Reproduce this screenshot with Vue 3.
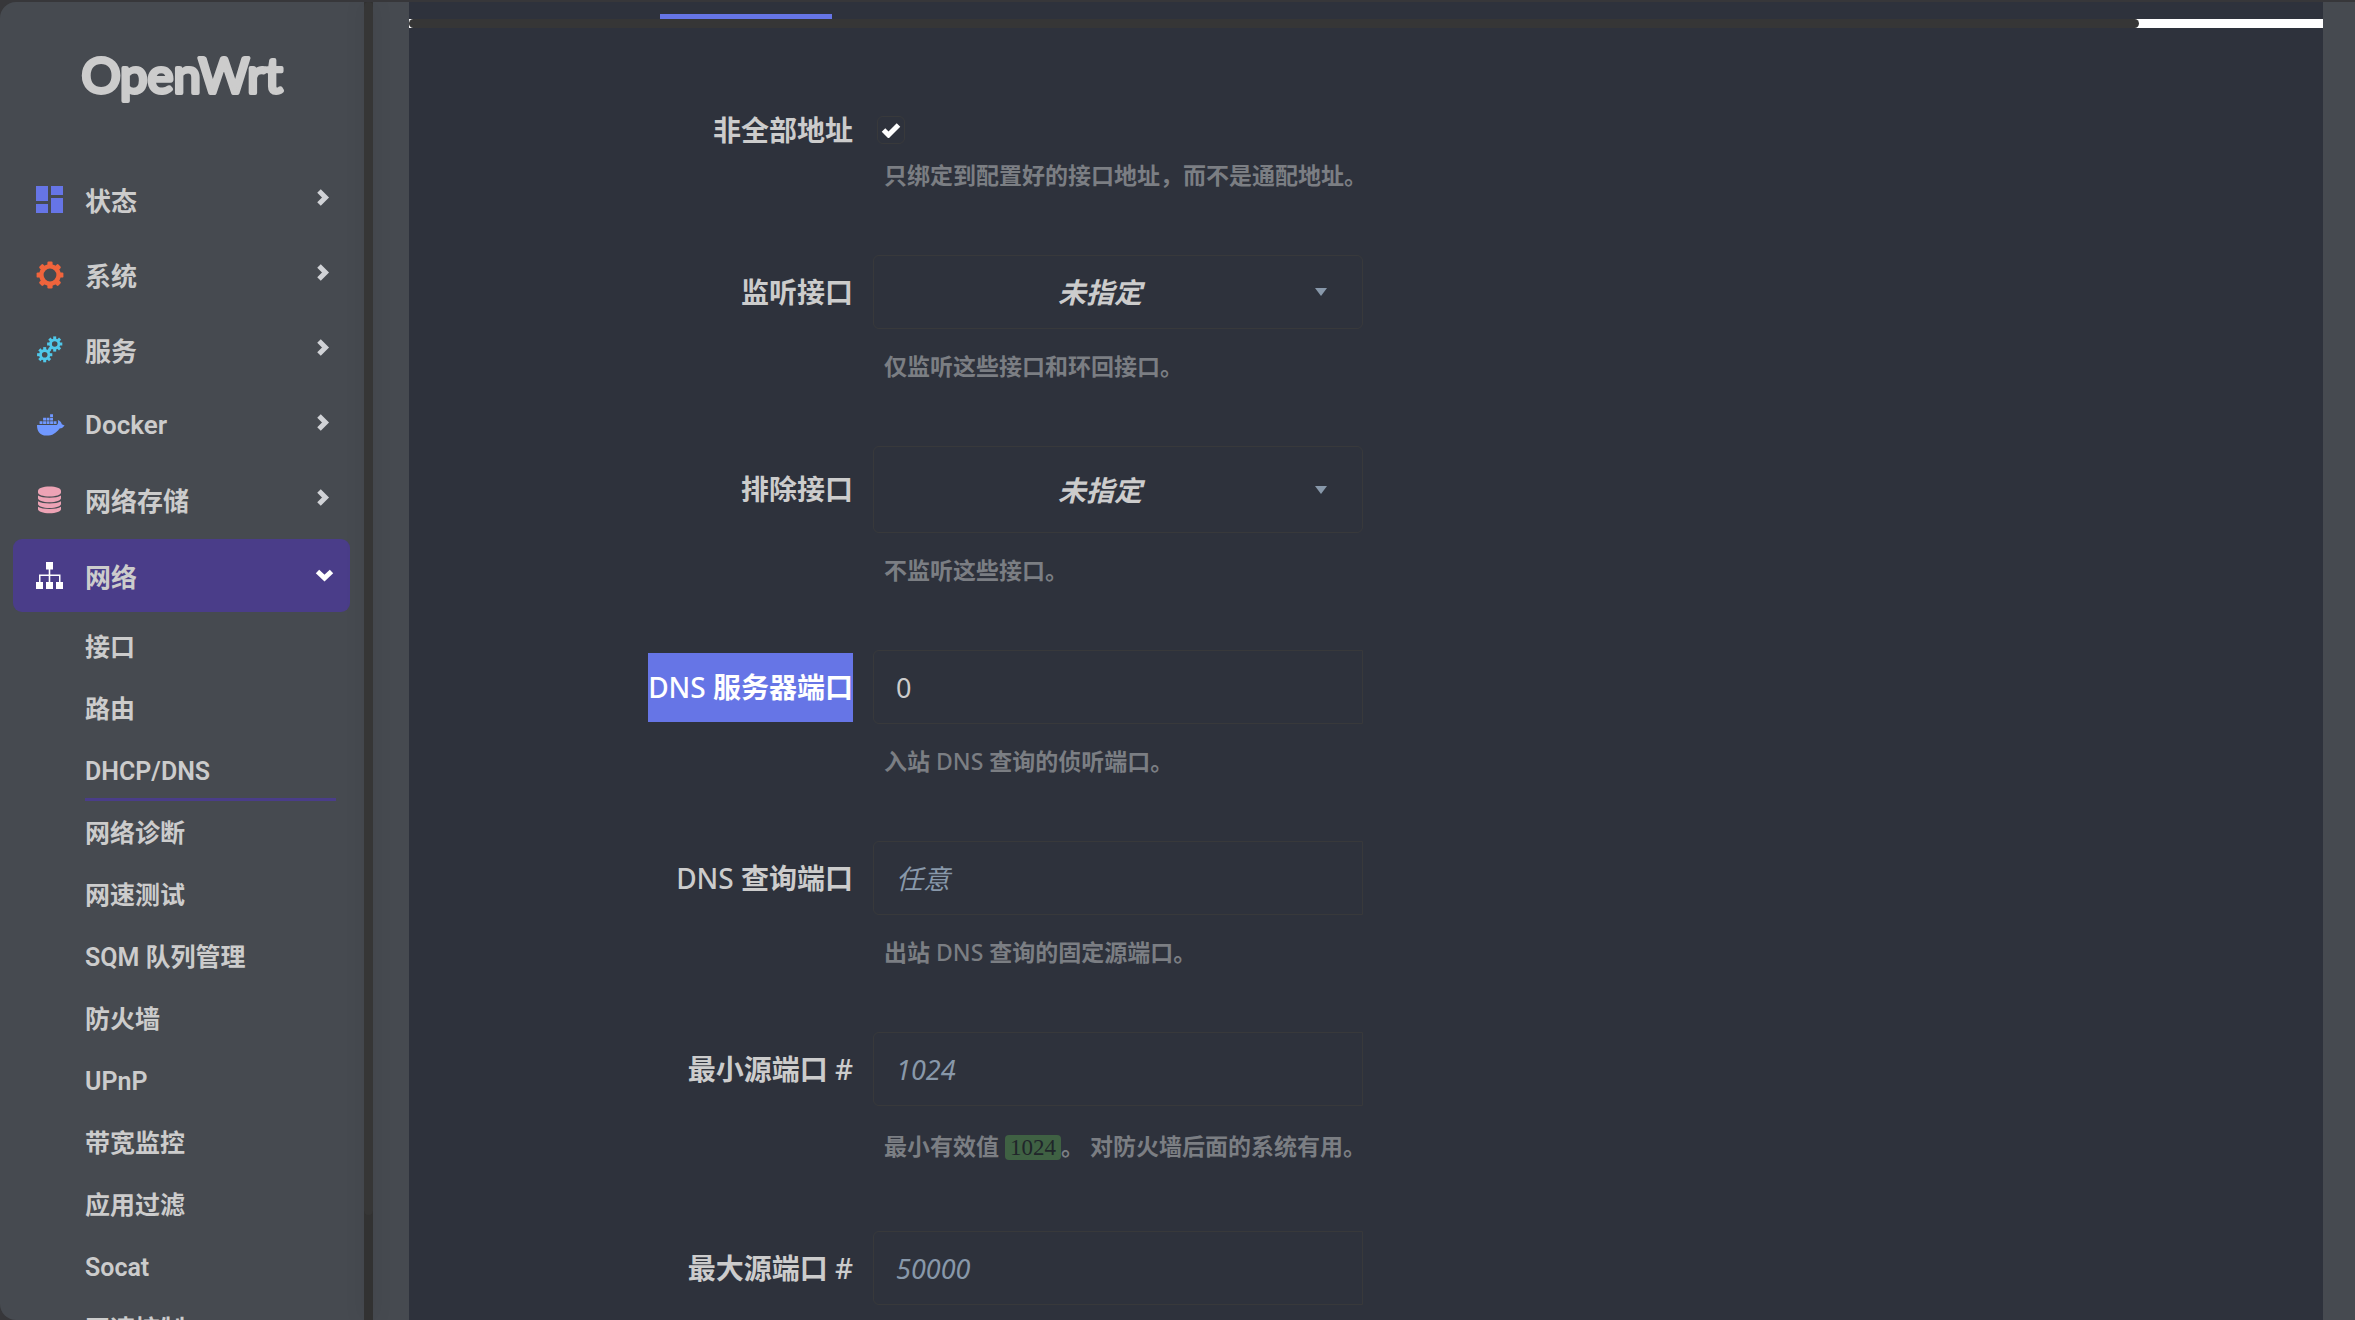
<template>
  <div class="layout">
    <aside class="sidebar">
      <h1 class="brand">
        <svg class="brand-logo" viewBox="0 0 220 72" role="img" aria-label="OpenWrt">
          <text x="110" y="51" text-anchor="middle">OpenWrt</text>
        </svg>
      </h1>
      <nav>
        <ul class="menu">
          <li v-for="item in menu" :key="item.name">
            <a href="#" class="menu-link" :class="{ active: item.active }" @click.prevent>
              <svg class="menu-icon" viewBox="0 0 28 28" aria-hidden="true" :class="item.icon">
                <g v-if="item.icon === 'dashboard'">
                  <path d="M0 0h12v15H0zM15 0h12v9H15zM0 18h12v9H0zM15 12h12v15H15z" />
                </g>
                <g v-else-if="item.icon === 'gear'">
                  <circle cx="14" cy="14" r="8.6" class="ring" />
                  <rect
                    v-for="n in 8"
                    :key="n"
                    x="11.4"
                    y="0.6"
                    width="5.2"
                    height="5"
                    rx="1.2"
                    :transform="`rotate(${n * 45} 14 14)`"
                  />
                </g>
                <g v-else-if="item.icon === 'gears'">
                  <g v-for="c in gearCenters" :key="c[0]" :transform="`translate(${c[0]} ${c[1]})`">
                    <circle r="4.2" class="ring" />
                    <rect
                      v-for="n in 8"
                      :key="n"
                      x="-1.5"
                      y="-7.6"
                      width="3"
                      height="3"
                      :transform="`rotate(${n * 45})`"
                    />
                  </g>
                </g>
                <g v-else-if="item.icon === 'docker'">
                  <path d="M1 14H20.6Q22.8 12.6 21.8 9Q25.4 10.4 25.8 13.2L28.6 14.4Q26.6 17.4 23.6 17.4C20 22 16.500 24.600 10.500 24.600C3.500 24.600 1 20 1 14Z" />
                  <path d="M3.600 10.200h2.900v2.900H3.600zM7.100 10.200H10v2.900H7.100zM10.600 10.200h2.900v2.900h-2.900zM14.100 10.200H17v2.900h-2.900zM17.600 10.200h2.900v2.900h-2.900zM7.100 6.700H10v2.900H7.100zM10.600 6.700h2.900v2.900h-2.900zM14.100 6.700H17v2.900h-2.900zM14.100 3.200H17v2.900h-2.900z" />
                </g>
                <g v-else-if="item.icon === 'database'">
                  <path d="M2 5C2 2.200 7 .5 13.500.5S25 2.200 25 5v1.500c0 2.400-5 4-11.500 4S2 8.900 2 6.500z" />
                  <path d="M2 9.600c4.500 3 18.500 3 23 0v2.700c0 2.300-5 4-11.500 4S2 14.600 2 12.300z" />
                  <path d="M2 15.200c4.500 3 18.500 3 23 0v2.700c0 2.300-5 4-11.500 4S2 20.200 2 17.900z" />
                  <path d="M2 20.800c4.500 3 18.500 3 23 0v2.400c0 2.300-5 4-11.500 4S2 25.500 2 23.200z" />
                </g>
                <g v-else>
                  <path d="M10 0h7v7.500h-2.700v5h10.200V20H23v-6h-8.700v6h-1.600v-6H4.500v6H3v-7.500h9.700v-5H10z" />
                  <path d="M0 20h7v7H0zM10 20h7v7h-7zM20 20h7v7h-7z" />
                </g>
              </svg>
              <span class="menu-text">{{ item.name }}</span>
              <svg class="arrow" viewBox="0 0 18 18" aria-hidden="true">
                <path :d="item.active ? 'M2.500 4.500L9.500 11L16.500 4.500' : 'M4 0L10.500 6.500L4 13'" />
              </svg>
            </a>
            <ul v-if="item.children" class="submenu">
              <li v-for="child in item.children" :key="child">
                <a href="#" :class="{ current: child === 'DHCP/DNS' }" @click.prevent>{{ child }}</a>
              </li>
            </ul>
          </li>
        </ul>
      </nav>
    </aside>
    <div class="scroll-y"><div class="thumb-y"></div></div>

    <main class="content">
      <div class="tabs"><span class="tab-line"></span></div>
      <div class="scroll-x"><div class="thumb-x"></div></div>

      <form class="form" @submit.prevent>
        <div v-for="field in fields" :key="field.id" class="row" :class="`row-${field.type}`">
          <label :for="field.id" class="label">
            <span :class="{ selected: field.selected }"
              ><span v-for="(part, i) in split(field.label)" :key="i" :class="{ latin: isLatin(part) }">{{ part }}</span></span
            >
          </label>

          <div class="control">
            <span v-if="field.type === 'checkbox'" class="check">
              <input :id="field.id" type="checkbox" checked />
              <svg viewBox="0 0 20 16" aria-hidden="true"><path d="M2.500 8L7.500 13L17.500 3" /></svg>
            </span>
            <span v-else-if="field.type === 'select'" class="select" :class="{ tall: field.tall }">
              <select :id="field.id">
                <option>未指定</option>
              </select>
            </span>
            <input
              v-else
              :id="field.id"
              class="text"
              type="text"
              :value="field.value"
              :placeholder="field.placeholder"
            />
          </div>

          <p v-if="field.code" class="help with-code">
            最小有效值 <code>{{ field.code }}</code>。 对防火墙后面的系统有用。
          </p>
          <p v-else-if="field.help" class="help">
            <span v-for="(part, i) in split(field.help)" :key="i" :class="{ latin: isLatin(part) }">{{ part }}</span>
          </p>
        </div>
      </form>
    </main>
  </div>
</template>

<script setup>
const gearCenters = [
  [18.7, 8],
  [8.7, 18.7],
];

const menu = [
  { name: "状态", icon: "dashboard" },
  { name: "系统", icon: "gear" },
  { name: "服务", icon: "gears" },
  { name: "Docker", icon: "docker" },
  { name: "网络存储", icon: "database" },
  {
    name: "网络",
    icon: "sitemap",
    active: true,
    children: [
      "接口",
      "路由",
      "DHCP/DNS",
      "网络诊断",
      "网速测试",
      "SQM 队列管理",
      "防火墙",
      "UPnP",
      "带宽监控",
      "应用过滤",
      "Socat",
      "网速控制",
    ],
  },
];

const fields = [
  { id: "nonwildcard", type: "checkbox", label: "非全部地址", help: "只绑定到配置好的接口地址，而不是通配地址。" },
  { id: "interface", type: "select", label: "监听接口", help: "仅监听这些接口和环回接口。" },
  { id: "notinterface", type: "select", tall: true, label: "排除接口", help: "不监听这些接口。" },
  { id: "port", type: "input", label: "DNS 服务器端口", selected: true, value: "0", help: "入站 DNS 查询的侦听端口。" },
  { id: "queryport", type: "input", label: "DNS 查询端口", placeholder: "任意", help: "出站 DNS 查询的固定源端口。" },
  { id: "minport", type: "input", label: "最小源端口 #", placeholder: "1024", code: "1024" },
  { id: "maxport", type: "input", label: "最大源端口 #", placeholder: "50000" },
];

// latin runs are set lighter than the chinese around them
function split(text) {
  return text.split(/([A-Za-z#]+)/).filter(Boolean);
}

function isLatin(part) {
  return /^[A-Za-z#]/.test(part);
}
</script>

<style>
body {
  margin: 0;
  background: #464a50;
}
</style>

<style scoped>
* {
  box-sizing: border-box;
}

.layout {
  display: flex;
  height: 100vh;
  overflow: hidden;
  border-top: 2px solid #37373a;
  background: #464a50;
  color: #ccc;
  font-family: "Noto Sans", "Noto Sans CJK SC", sans-serif;
}

/* sidebar */
.sidebar {
  flex: 0 0 364px;
  overflow: hidden;
  padding: 0 14px 0 13px;
  border-radius: 16px 0 0 16px;
  background: #464a50;
  box-shadow: -16px 0 0 #37373a;
  font-family: Roboto, "Noto Sans CJK SC", sans-serif;
  font-weight: 600;
}
.brand {
  display: flex;
  justify-content: center;
  height: 161px;
  margin: 0;
  padding-top: 40px;
}
.brand-logo {
  width: 220px;
  height: 72px;
}
.brand-logo text {
  font-family: Lato, sans-serif;
  font-size: 49px;
  font-weight: 400;
  fill: #ccc;
  stroke: #ccc;
  stroke-width: 4;
  stroke-linejoin: round;
}
.menu,
.submenu {
  margin: 0;
  padding: 0;
  list-style: none;
}
.menu {
  display: flex;
  flex-direction: column;
  gap: 2px;
}
.menu-link {
  display: flex;
  align-items: center;
  height: 73px;
  padding: 0 17px 0 23px;
  border-radius: 9px;
  color: #ccc;
  font-size: 26px;
  text-decoration: none;
}
.menu-link.active {
  margin-top: 1px;
  background: #4a3d89;
}
.menu-icon {
  width: 28px;
  height: 28px;
  overflow: visible;
}
.menu-text {
  flex: 1;
  margin-left: 21px;
}
.ring {
  fill: none;
}
.dashboard {
  fill: #6675e6;
}
.gear {
  fill: #f0643c;
}
.gear .ring {
  stroke: #f0643c;
  stroke-width: 4.4;
}
.gears {
  fill: #4fc8ea;
}
.gears .ring {
  stroke: #4fc8ea;
  stroke-width: 2.8;
}
.docker {
  fill: #7098ff;
}
.database {
  fill: #eda3b5;
}
.sitemap {
  fill: #fff;
}
.arrow {
  width: 18px;
  height: 18px;
  overflow: visible;
  fill: none;
  stroke: #d0d2d6;
  stroke-width: 5;
}
.active .arrow {
  stroke: #fff;
}
.submenu {
  padding: 5px 14px 0 72px;
}
.submenu a {
  display: block;
  margin-bottom: 2px;
  padding-top: 4px;
  border-bottom: 3px solid transparent;
  color: #ccc;
  font-size: 25px;
  line-height: 53px;
  text-decoration: none;
  white-space: nowrap;
}
.submenu a.current {
  border-color: #4a3d89;
}
.scroll-y {
  flex: 0 0 9px;
  background: #323232;
  box-shadow: 0 0 20px rgba(0, 0, 0, 0.1);
}
.thumb-y {
  height: 92%;
  border-radius: 5px;
  background: #363636;
}

/* content */
.content {
  flex: 1;
  min-width: 0;
  margin: 0 32px 0 36px;
  overflow: hidden;
  background: #2e323c;
}
.tabs {
  display: flex;
  align-items: flex-end;
  height: 17px;
  padding-left: 251px;
}
.tab-line {
  width: 172px;
  height: 5px;
  background: #6675e6;
}
.scroll-x {
  height: 9px;
  background: #fff;
}
.thumb-x {
  width: 90.4%;
  height: 9px;
  border-radius: 5px;
  background: #363636;
}
.form {
  display: flex;
  flex-direction: column;
  gap: 61px;
  padding-top: 76px;
}
.row {
  display: grid;
  grid-template-columns: 23.2% 25.6%;
  column-gap: 20px;
  align-items: center;
}
.label {
  font-size: 28px;
  font-weight: 700;
  line-height: 69px;
  text-align: right;
  white-space: nowrap;
}
.row-checkbox .label {
  line-height: 52px;
}
.latin {
  font-weight: 500;
}
.selected {
  display: inline-block;
  background: #6675e6;
  color: #fff;
}
.check {
  display: grid;
  width: 28px;
  height: 28px;
  margin-left: 4px;
}
.check input {
  grid-area: 1 / 1;
  width: 28px;
  height: 28px;
  margin: 0;
  appearance: none;
  border: 1px solid #38393b;
  border-radius: 6px;
}
.check svg {
  grid-area: 1 / 1;
  place-self: center;
  width: 20px;
  height: 16px;
  fill: none;
  stroke: #fff;
  stroke-width: 5;
  pointer-events: none;
}
.select {
  position: relative;
  display: block;
}
.select::after {
  content: "";
  position: absolute;
  top: 50%;
  right: 36px;
  margin-top: -4px;
  border: 6px solid transparent;
  border-top: 8px solid #8898aa;
  border-bottom: 0;
  pointer-events: none;
}
select,
.text {
  display: block;
  width: 100%;
  height: 74px;
  border: 1px solid #38393b;
  border-radius: 6px;
  outline: 0;
  background: transparent;
  color: #ccc;
  font-family: inherit;
  font-size: 28px;
}
select {
  appearance: none;
  padding: 0 36px 0 0;
  font-style: italic;
  font-weight: 700;
  text-align: center;
  text-align-last: center;
}
.tall select {
  height: 87px;
}
.text {
  padding: 0 22px;
  border-radius: 6px 0 0 6px;
  font-size: 27px;
}
.text::placeholder {
  color: #8898aa;
  font-style: italic;
  opacity: 1;
}
.help {
  grid-column: 2;
  margin: 18px 0 0;
  padding-left: 11px;
  color: #7b7e83;
  font-size: 23px;
  font-weight: 700;
  line-height: 38px;
  white-space: nowrap;
}
.row-checkbox .help {
  margin-top: 0;
}
.with-code {
  line-height: 45px;
}
code {
  padding: 0 5px;
  border-radius: 4px;
  background: #3f6143;
  color: #20252a;
  font-family: "Liberation Serif", serif;
  font-size: 23px;
  font-weight: 400;
}
</style>
